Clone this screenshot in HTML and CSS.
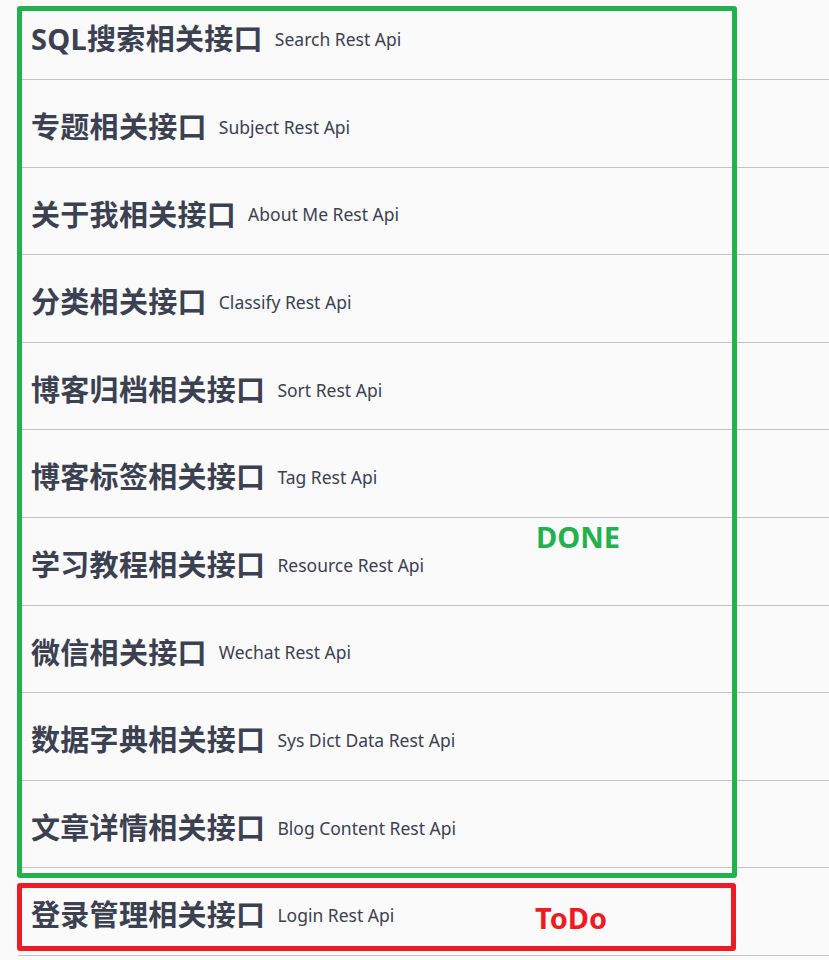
FILE: index.html
```html
<!DOCTYPE html>
<html lang="zh-CN">
<head>
<meta charset="utf-8">
<title>API Tags</title>
<link rel="stylesheet" href="styles.css">
</head>
<body>
<div class="page">
  <div class="tags">
    <div class="tag"><h4 class="tag-name">SQL搜索相关接口</h4><small class="tag-desc">Search Rest Api</small></div>
    <div class="tag"><h4 class="tag-name">专题相关接口</h4><small class="tag-desc">Subject Rest Api</small></div>
    <div class="tag"><h4 class="tag-name">关于我相关接口</h4><small class="tag-desc">About Me Rest Api</small></div>
    <div class="tag"><h4 class="tag-name">分类相关接口</h4><small class="tag-desc">Classify Rest Api</small></div>
    <div class="tag"><h4 class="tag-name">博客归档相关接口</h4><small class="tag-desc">Sort Rest Api</small></div>
    <div class="tag"><h4 class="tag-name">博客标签相关接口</h4><small class="tag-desc">Tag Rest Api</small></div>
    <div class="tag"><h4 class="tag-name">学习教程相关接口</h4><small class="tag-desc">Resource Rest Api</small></div>
    <div class="tag"><h4 class="tag-name">微信相关接口</h4><small class="tag-desc">Wechat Rest Api</small></div>
    <div class="tag"><h4 class="tag-name">数据字典相关接口</h4><small class="tag-desc">Sys Dict Data Rest Api</small></div>
    <div class="tag"><h4 class="tag-name">文章详情相关接口</h4><small class="tag-desc">Blog Content Rest Api</small></div>
    <div class="tag"><h4 class="tag-name">登录管理相关接口</h4><small class="tag-desc">Login Rest Api</small></div>
  </div>
  <div class="mark mark-done"></div>
  <div class="mark mark-todo"></div>
  <span class="label label-done">DONE</span>
  <span class="label label-todo">ToDo</span>
</div>
</body>
</html>
```
FILE: styles.css
```css
html, body {
  margin: 0;
  padding: 0;
  background: #fafafa;
}
body {
  font-family: "Noto Sans", "Noto Sans CJK SC", sans-serif;
  color: #3b4151;
  overflow: hidden;
}
.page {
  position: relative;
  width: 829px;
  height: 960px;
  overflow: hidden;
}
.tags {
  margin: -7.6px 0 0 18px;
}
.tag {
  display: flex;
  align-items: center;
  box-sizing: border-box;
  height: 87.6px;
  padding: 7px 0 0 13px;
  border-bottom: 1px solid #c1c3c8;
}
.tag-name {
  margin: 0;
  font-family: "Noto Sans", "Noto Sans CJK SC", sans-serif;
  font-size: 29px;
  font-weight: 700;
  line-height: 1.3;
  letter-spacing: 0.3px;
  color: #3b4151;
}
.tag-desc {
  margin-left: 12px;
  font-family: "Noto Sans", "Noto Sans CJK SC", sans-serif;
  font-size: 17.5px;
  font-weight: 400;
  color: #3b4151;
}
.mark {
  position: absolute;
  box-sizing: border-box;
  border: 5px solid;
  border-radius: 3px;
}
.mark-done {
  left: 17px;
  top: 6px;
  width: 720px;
  height: 872px;
  border-color: #22b14c;
}
.mark-todo {
  left: 17px;
  top: 883px;
  width: 719px;
  height: 68px;
  border-color: #ed1c24;
}
.label {
  position: absolute;
  font-family: "Noto Sans", sans-serif;
  font-weight: 700;
  font-size: 29px;
  line-height: 1;
}
.label-done {
  left: 536px;
  top: 522px;
  color: #22b14c;
}
.label-todo {
  left: 535px;
  top: 903px;
  color: #ed1c24;
}
```
